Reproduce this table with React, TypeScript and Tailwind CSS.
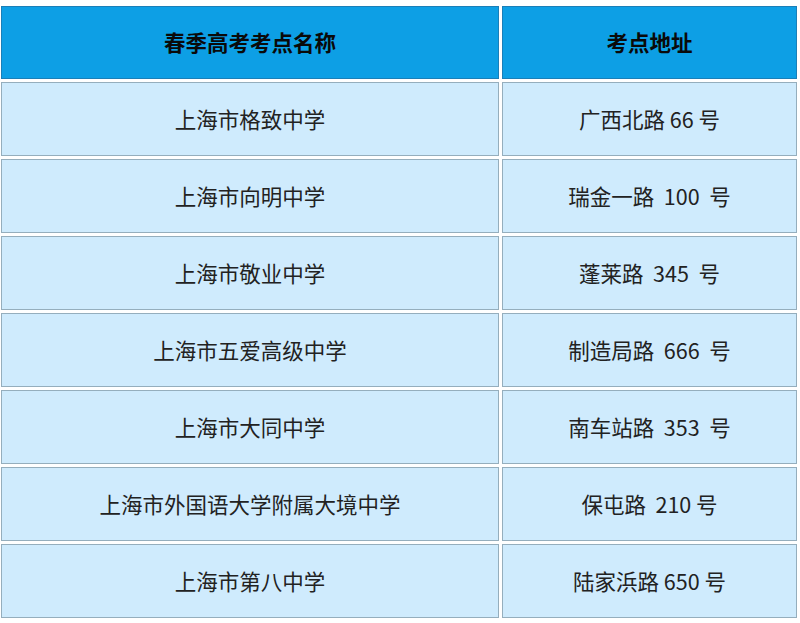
const rows: [string, string][] = [
  ['上海市格致中学', '广西北路 66 号'],
  ['上海市向明中学', '瑞金一路  100  号'],
  ['上海市敬业中学', '蓬莱路  345  号'],
  ['上海市五爱高级中学', '制造局路  666  号'],
  ['上海市大同中学', '南车站路  353  号'],
  ['上海市外国语大学附属大境中学', '保屯路  210 号'],
  ['上海市第八中学', '陆家浜路 650 号'],
];

export default function App() {
  return (
    <div
      className="w-[800px] h-[623px] bg-white pt-[6px] pl-[1px]"
      style={{ fontFamily: '"Noto Sans CJK SC", "Noto Sans", sans-serif' }}
    >
      <div className="grid grid-cols-[498px_295px] gap-x-[3px] gap-y-[3px]">
        <div className="h-[73px] flex items-center justify-center bg-[#0d9fe5] border border-[#1a7fb8] text-[21.5px] font-bold text-[#0a0a0a]">
          春季高考考点名称
        </div>
        <div className="h-[73px] flex items-center justify-center bg-[#0d9fe5] border border-[#1a7fb8] text-[21.5px] font-bold text-[#0a0a0a]">
          考点地址
        </div>
        {rows.map(([name, addr]) => (
          <>
            <div
              key={name}
              className="h-[74px] flex items-center justify-center bg-[#cfebfd] border border-[#95aebd] text-[21.5px] text-[#222]"
            >
              {name}
            </div>
            <div
              key={addr}
              className="h-[74px] flex items-center justify-center bg-[#cfebfd] border border-[#95aebd] text-[21.5px] text-[#222] whitespace-pre"
            >
              {addr}
            </div>
          </>
        ))}
      </div>
    </div>
  );
}
